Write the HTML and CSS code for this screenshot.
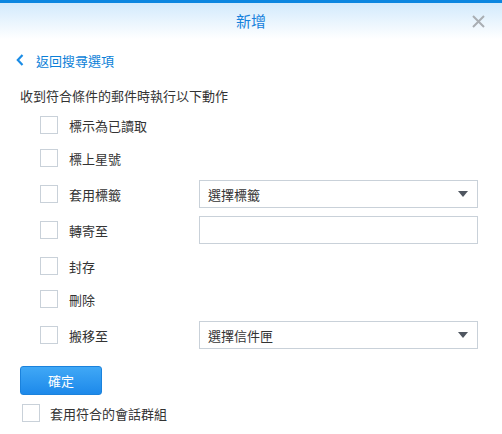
FILE: index.html
```html
<!DOCTYPE html>
<html lang="zh-Hant">
<head>
<meta charset="utf-8">
<title>新增</title>
<link rel="stylesheet" href="styles.css">
</head>
<body>
<div class="dialog">
  <div class="header">
    <span class="title">新增</span>
    <span class="close">
      <svg width="13" height="13" viewBox="0 0 13 13"><path d="M1 1 L12 12 M12 1 L1 12" stroke="#a9aeb3" stroke-width="2" fill="none"/></svg>
    </span>
  </div>
  <div class="back">
    <svg class="back-icon" width="8" height="12" viewBox="0 0 8 12"><path d="M6.5 1 L1.8 6 L6.5 11" stroke="#1a8ce6" stroke-width="2.2" fill="none"/></svg>
    <span>返回搜尋選項</span>
  </div>
  <div class="desc">收到符合條件的郵件時執行以下動作</div>
  <div class="rows">
    <div class="row"><span class="cb"></span><span class="label">標示為已讀取</span></div>
    <div class="row tight"><span class="cb"></span><span class="label">標上星號</span></div>
    <div class="row"><span class="cb"></span><span class="label">套用標籤</span>
      <div class="field select"><span>選擇標籤</span><span class="arrow"></span></div></div>
    <div class="row"><span class="cb"></span><span class="label">轉寄至</span>
      <div class="field"></div></div>
    <div class="row"><span class="cb"></span><span class="label">封存</span></div>
    <div class="row tight"><span class="cb"></span><span class="label">刪除</span></div>
    <div class="row"><span class="cb"></span><span class="label">搬移至</span>
      <div class="field select"><span>選擇信件匣</span><span class="arrow"></span></div></div>
  </div>
  <div class="actions">
    <button class="btn">確定</button>
  </div>
  <div class="footer-row"><span class="cb"></span><span class="label">套用符合的會話群組</span></div>
</div>
</body>
</html>
```
FILE: styles.css
```css
html, body {
  margin: 0;
  padding: 0;
  background: #fff;
}
body {
  font-family: "Noto Sans CJK TC", "Liberation Sans", sans-serif;
  font-size: 13px;
  color: #333;
}
.dialog {
  width: 502px;
  height: 434px;
  overflow: hidden;
  border-top: 3px solid #0b86e0;
  box-sizing: border-box;
}
.header {
  height: 36px;
  position: relative;
  display: flex;
  align-items: center;
  justify-content: center;
  background: linear-gradient(#d2eafc, #ffffff);
}
.title {
  font-size: 15px;
  color: #1581dc;
  line-height: 20px;
  margin-top: -1px;
}
.close {
  position: absolute;
  right: 17px;
  top: 12px;
  width: 13px;
  height: 13px;
  display: flex;
}
.back {
  display: flex;
  align-items: center;
  height: 20px;
  margin-top: 11px;
  padding-left: 16px;
  color: #0b7fd8;
  font-size: 13px;
}
.back-icon {
  margin-right: 12px;
}
.desc {
  margin-top: 16px;
  padding-left: 20px;
  height: 20px;
  line-height: 20px;
}
.rows {
  display: flex;
  flex-direction: column;
  gap: 8px;
  margin-top: 5px;
  padding-left: 40px;
}
.row {
  display: flex;
  align-items: center;
  height: 28px;
}
.row.tight {
  margin-top: -3px;
}
.cb {
  width: 16px;
  height: 16px;
  border: 1px solid #c9d1d9;
  background: #fff;
  flex: none;
}
.row .label {
  margin-left: 11px;
  width: 130px;
}
.field {
  width: 277px;
  height: 26px;
  border: 1px solid #c9d1d9;
  background: #fff;
  display: flex;
  align-items: center;
  box-sizing: content-box;
}
.select {
  padding-left: 8px;
  width: 269px;
  justify-content: space-between;
}
.arrow {
  width: 0;
  height: 0;
  border-left: 5px solid transparent;
  border-right: 5px solid transparent;
  border-top: 6px solid #4f5660;
  margin-right: 9px;
}
.actions {
  margin-top: 17px;
  padding-left: 20px;
}
.btn {
  width: 82px;
  height: 29px;
  border: 1px solid #1b82dc;
  border-radius: 3px;
  background: linear-gradient(#40a8f6, #1d89ea);
  color: #fff;
  font-family: inherit;
  font-size: 13px;
  padding: 0;
  display: block;
}
.footer-row {
  display: flex;
  align-items: center;
  margin-top: 9px;
  padding-left: 22px;
  height: 18px;
}
.footer-row .label {
  margin-left: 10px;
}
```
